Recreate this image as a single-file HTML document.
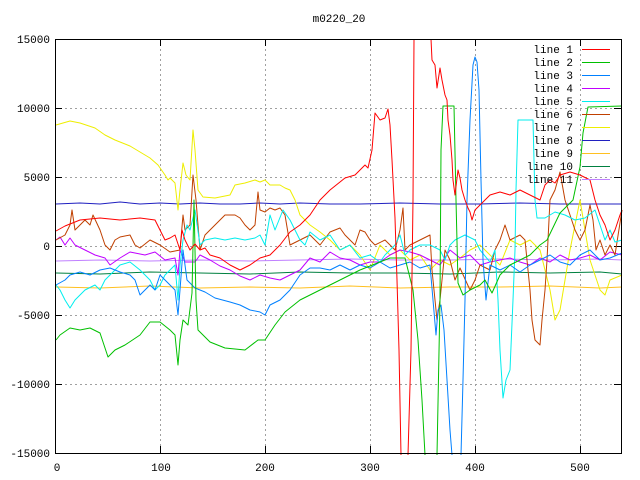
<!DOCTYPE html>
<html><head><meta charset="utf-8"><style>
html,body{margin:0;padding:0;background:#fff;}
svg{display:block;}
text{font-family:"Liberation Mono","DejaVu Sans Mono",monospace;font-size:11px;fill:#000;}
</style></head><body>
<svg width="640" height="480" viewBox="0 0 640 480" xmlns="http://www.w3.org/2000/svg">
<rect width="640" height="480" fill="#fff"/>
<g stroke="#a0a0a0" stroke-width="1" stroke-dasharray="2,3" fill="none">
<path d="M160.5 39V453M265.5 39V453M370.5 39V453M475.5 39V453M580.5 39V453"/>
<path d="M55 108.5H622M55 177.5H622M55 246.5H622M55 315.5H622M55 384.5H622"/>
</g>
<g stroke="#000" stroke-width="1">
<path d="M55.5 453V446M160.5 453V446M265.5 453V446M370.5 453V446M475.5 453V446M580.5 453V446M160.5 39V46M265.5 39V46M370.5 39V46M475.5 39V46M580.5 39V46"/>
<path d="M55 39.5H62M55 108.5H62M55 177.5H62M55 246.5H62M55 315.5H62M55 384.5H62M55 453.5H62M621 39.5H614M621 108.5H614M621 177.5H614M621 246.5H614M621 315.5H614M621 384.5H614M621 453.5H614"/>
</g>
<g fill="none" stroke-width="1" stroke-linejoin="round">
<polyline stroke="#ffc020" points="56,287 100,288 150,286 200,288 250,287 300,288 350,286 400,288 450,287 500,287 550,286 600,288 622,287"/>
<polyline stroke="#008040" points="56,273 100,274 150,272 200,273 250,274 300,272 350,273 400,273 450,274 500,272 550,273 600,272 622,274"/>
<polyline stroke="#c080ff" points="56,261 100,260 150,261 200,260 250,261 300,260 350,259 400,260 450,260 500,259 550,260 600,259 622,260"/>
<polyline stroke="#2020c0" points="56,204 80,203 100,204 120,202 140,204 160,203 180,204 200,203 220,204 240,204 260,203 280,204 300,203 330,204 360,204 400,203 440,204 480,204 520,203 560,204 600,204 622,204"/>
<polyline stroke="#eeee00" points="56,125 70,121 80,123 95,128 105,135 115,140 130,146 140,152 150,158 158,165 165,175 168,180 170,178 175,183 178,210 180,190 183,163 186,175 190,180 193,130 195,150 198,190 203,197 215,198 230,195 235,185 245,183 255,180 260,182 265,180 270,185 280,185 285,188 290,190 295,200 300,215 310,225 320,232 330,240 340,250 350,245 360,255 370,270 380,245 390,255 400,250 410,260 420,255 430,270 440,260 450,265 460,258 470,250 480,245 490,255 500,265 510,240 520,245 530,240 540,250 550,290 555,320 560,310 565,280 570,250 580,200 590,260 600,290 605,295 610,280 622,275"/>
<polyline stroke="#c000ff" points="56,240 60,237 65,245 70,238 75,245 85,250 95,255 105,258 110,265 120,258 130,252 145,255 155,252 165,260 175,258 178,275 180,250 185,262 195,262 200,255 210,260 220,266 230,270 240,276 250,280 260,275 270,278 280,280 290,275 300,270 310,258 320,262 330,252 340,258 350,260 360,265 370,262 380,262 390,255 400,250 410,252 420,255 430,260 440,265 450,250 460,258 470,255 480,265 490,262 500,260 510,258 520,262 530,265 540,258 550,262 560,255 570,260 580,258 590,255 600,260 610,252 622,255"/>
<polyline stroke="#c04000" points="56,240 65,235 70,225 72,210 75,230 80,225 85,220 90,225 93,215 100,230 105,245 110,250 115,240 120,237 130,235 135,245 140,248 150,240 160,245 170,252 180,250 183,215 185,230 190,225 193,175 196,200 200,250 205,235 215,225 225,215 235,215 240,218 245,225 250,230 255,225 258,192 260,210 265,212 270,208 275,210 280,208 285,215 290,245 300,240 310,235 320,245 330,232 340,228 345,235 355,245 360,230 365,232 370,240 375,245 385,240 395,250 400,230 403,208 405,250 410,245 420,240 430,235 432,270 435,300 437,320 440,300 445,250 450,260 455,280 460,268 470,290 475,280 480,265 490,270 495,250 500,240 505,225 510,240 520,235 525,240 527,260 530,290 532,320 535,340 537,342 540,345 542,320 545,290 547,260 550,200 555,190 560,172 565,200 570,215 575,230 580,240 585,230 590,205 593,220 596,250 600,240 605,255 610,245 615,255 622,210"/>
<polyline stroke="#00eeee" points="56,285 60,290 65,300 70,308 75,300 85,290 95,285 100,290 105,280 110,275 120,265 130,262 140,270 150,280 155,290 160,285 165,275 170,270 175,265 178,300 180,265 183,240 187,225 190,230 195,210 200,245 205,240 215,238 225,240 235,238 245,240 255,238 260,235 265,245 270,215 275,230 283,210 290,220 295,230 300,240 305,245 310,232 320,240 330,235 340,250 350,245 360,258 370,255 380,262 385,255 395,245 400,235 405,255 410,250 420,245 430,245 440,250 445,260 450,245 455,240 465,235 475,240 480,250 490,262 495,250 498,300 500,350 503,398 506,380 510,370 513,300 515,250 516,190 518,120 533,120 535,200 537,218 545,218 555,212 565,215 575,220 585,218 595,210 600,225 605,240 610,230 615,242 622,240"/>
<polyline stroke="#0080ff" points="56,285 65,280 70,275 80,272 90,275 100,270 110,268 120,272 130,275 135,280 140,295 145,290 150,285 155,290 160,275 170,285 175,290 178,315 180,290 183,250 187,280 190,283 195,288 205,292 215,298 230,302 240,305 250,310 260,312 265,315 270,305 280,300 290,290 300,275 310,268 320,268 330,270 340,265 350,270 360,265 370,268 380,262 390,268 400,265 410,262 420,268 430,265 433,300 436,335 438,310 441,305 444,330 447,380 450,430 452,455"/>
<polyline stroke="#0080ff" points="461,455 463,380 465,300 467,200 470,120 473,65 475,57 477,62 479,90 481,180 483,260 486,300 490,265 500,270 510,265 520,272 530,265 540,260 550,255 560,262 570,265 580,255 590,250 600,260 610,258 622,253"/>
<polyline stroke="#00c000" points="56,340 60,335 70,328 80,330 90,328 100,333 108,357 115,350 125,345 140,335 150,322 160,322 170,330 175,335 178,365 180,340 183,320 188,325 192,293 194,200 196,300 198,330 210,342 225,348 245,350 258,340 265,340 275,325 285,312 300,300 320,290 340,280 360,270 380,262 390,258 405,258 413,290 418,340 422,400 425,455"/>
<polyline stroke="#00c000" points="437,455 440,300 441,150 443,106 454,106 456,200 458,283 463,295 470,290 480,285 485,280 492,293 500,275 510,265 520,260 530,255 540,245 547,240 560,213 573,200 580,167 583,133 588,107 622,106"/>
<polyline stroke="#ff0000" points="56,231 65,226 80,220 100,218 120,220 140,218 155,220 160,230 165,240 170,238 175,235 180,250 182,230 185,240 190,250 195,244 200,250 205,248 210,255 220,258 230,265 240,270 250,265 260,258 270,255 280,245 290,232 300,225 310,215 320,200 330,190 340,182 345,178 355,175 365,165 368,168 372,150 375,113 380,120 385,118 388,109 390,125 392,160 395,218 397,280 399,350 401,455"/>
<polyline stroke="#ff0000" points="408,455 411,350 413,200 414,39"/>
<polyline stroke="#ff0000" points="431,39 432,60 435,65 437,88 440,68 442,80 445,95 447,100 448,120 450,135 452,160 453,180 455,195 458,170 460,178 462,190 465,200 468,208 470,212 472,220 475,210 480,205 490,195 500,192 510,195 520,190 530,195 540,200 545,185 550,180 555,183 560,175 570,172 580,175 590,180 595,200 600,215 605,225 610,240 615,230 620,215 622,210"/>
</g>
<rect x="55.5" y="39.5" width="566" height="414" fill="none" stroke="#000" stroke-width="1"/>
<rect x="533" y="42" width="78" height="142" fill="#fff" opacity="0"/>
<g text-anchor="end">
<text x="573" y="53">line 1</text>
<text x="573" y="66">line 2</text>
<text x="573" y="79">line 3</text>
<text x="573" y="92">line 4</text>
<text x="573" y="105">line 5</text>
<text x="573" y="118">line 6</text>
<text x="573" y="131">line 7</text>
<text x="573" y="144">line 8</text>
<text x="573" y="157">line 9</text>
<text x="573" y="170">line 10</text>
<text x="573" y="183">line 11</text>
</g>
<g stroke-width="1">
<path d="M582 49.5H610" stroke="#ff0000"/>
<path d="M582 62.5H610" stroke="#00c000"/>
<path d="M582 75.5H610" stroke="#0080ff"/>
<path d="M582 88.5H610" stroke="#c000ff"/>
<path d="M582 101.5H610" stroke="#00eeee"/>
<path d="M582 114.5H610" stroke="#c04000"/>
<path d="M582 127.5H610" stroke="#eeee00"/>
<path d="M582 140.5H610" stroke="#2020c0"/>
<path d="M582 153.5H610" stroke="#ffc020"/>
<path d="M582 166.5H610" stroke="#008040"/>
<path d="M582 179.5H610" stroke="#c080ff"/>
</g>
<g text-anchor="end">
<text x="50" y="43">15000</text>
<text x="50" y="112">10000</text>
<text x="50" y="181">5000</text>
<text x="50" y="250">0</text>
<text x="50" y="319">-5000</text>
<text x="50" y="388">-10000</text>
<text x="50" y="457">-15000</text>
</g>
<g text-anchor="middle">
<text x="57" y="471">0</text>
<text x="161" y="471">100</text>
<text x="265" y="471">200</text>
<text x="370" y="471">300</text>
<text x="475" y="471">400</text>
<text x="580" y="471">500</text>
<text x="339" y="22">m0220_20</text>
</g>
</svg>
</body></html>
